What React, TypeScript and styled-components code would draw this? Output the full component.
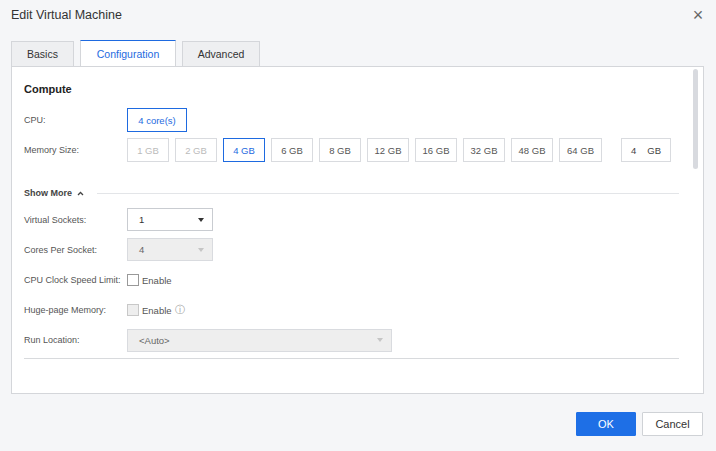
import React from "react";
import styled, { createGlobalStyle } from "styled-components";

const Global = createGlobalStyle`
  body { margin: 0; background: #f5f6f8; font-family: "Liberation Sans", Arial, sans-serif; }
`;
const Dialog = styled.div`
  width: 716px; height: 451px; box-sizing: border-box; background: #f5f6f8;
  display: flex; flex-direction: column; padding: 0 12px 0 11px;
`;
const Header = styled.div`
  height: 30px; display: flex; align-items: center; justify-content: space-between;
  font-size: 12.5px; color: #333; margin-right: -2px;
`;
const Close = styled.span` font-size: 18px; color: #666; width: 16px; text-align:center; line-height: 16px; `;
const Tabs = styled.div` display: flex; gap: 6px; margin-top: 10px; height: 26px; align-items: flex-end; `;
const Tab = styled.div<{ $active?: boolean; $w: number }>`
  width: ${p => p.$w}px; height: ${p => (p.$active ? 27 : 25)}px; box-sizing: border-box;
  display: flex; align-items: center; justify-content: center; font-size: 10.5px;
  background: ${p => (p.$active ? "#fff" : "#eeeff1")};
  color: ${p => (p.$active ? "#1e6ae0" : "#333")};
  border: 1px solid #d4d6da; border-bottom: none;
  ${p => p.$active && "border-top: 1px solid #1e6ae0; margin-bottom: -1px; position: relative;"}
`;
const Panel = styled.div`
  height: 328px; background: #fff; border: 1px solid #d4d6da; box-sizing: border-box;
  display: flex; position: relative; overflow: hidden;
`;
const Content = styled.div` flex: 1; padding: 16px 24px 0 12px; `;
const Scroll = styled.div`
  position: absolute; right: 5px; top: 2px; width: 5px; height: 100px; background: #d8dadf; border-radius: 3px;
`;
const Section = styled.div` font-size: 11px; font-weight: bold; color: #222; margin-bottom: 14px; `;
const Row = styled.div<{ $h?: number; $mb?: number }>`
  display: flex; align-items: center; height: ${p => p.$h ?? 24}px; margin-bottom: ${p => p.$mb ?? 6}px;
`;
const Label = styled.div` width: 103px; flex-shrink: 0; font-size: 9px; color: #555; white-space: nowrap; `;
const Opt = styled.div<{ $sel?: boolean; $dis?: boolean; $w?: number }>`
  width: ${p => p.$w ?? 42}px; height: 24px; box-sizing: border-box; display: flex; align-items: center; justify-content: center;
  font-size: 9.5px; margin-right: 6px;
  border: 1px solid ${p => (p.$sel ? "#1e6ae0" : "#d9dbdf")};
  color: ${p => (p.$sel ? "#1e6ae0" : p.$dis ? "#bbb" : "#555")};
`;
const NumInput = styled.div`
  width: 50px; height: 24px; box-sizing: border-box; border: 1px solid #d9dbdf; margin-left: 13px;
  display: flex; justify-content: space-between; align-items: center; padding: 0 9px; font-size: 9.5px; color: #444;
`;
const ShowMore = styled.div`
  display: flex; align-items: center; font-size: 9px; font-weight: bold; color: #444; margin: 26px 0 10px;
  & > span { margin-right: 13px; display: flex; align-items: center; gap: 5px; }
  &::after { content: ""; flex: 1; border-top: 1px solid #e3e5e8; }
`;
const Select = styled.div<{ $w: number; $dis?: boolean }>`
  width: ${p => p.$w}px; height: 23px; box-sizing: border-box; border: 1px solid ${p => (p.$dis ? "#d9dbdf" : "#c9ccd1")};
  background: ${p => (p.$dis ? "#eeeeee" : "#fff")}; color: ${p => (p.$dis ? "#666" : "#333")};
  display: flex; align-items: center; justify-content: space-between; padding: 0 8px 0 11px; font-size: 9.5px;
`;
const Caret = styled.span<{ $dis?: boolean }>`
  width: 0; height: 0; border-left: 3px solid transparent; border-right: 3px solid transparent;
  border-top: 4px solid ${p => (p.$dis ? "#c5c5c5" : "#333")};
`;
const Check = styled.span<{ $dis?: boolean }>`
  width: 10px; height: 10px; border: 1px solid ${p => (p.$dis ? "#c8c8c8" : "#999")};
  background: ${p => (p.$dis ? "#eee" : "#fff")};
`;
const CheckText = styled.span` font-size: 9.5px; color: #555; display: flex; align-items: center; gap: 3px; `;
const Divider = styled.div` border-top: 1px solid #d8dadd; margin-top: 6px; `;
const Footer = styled.div` flex: 1; display: flex; justify-content: flex-end; align-items: center; gap: 6px; padding-top: 2px; margin-right: 1px;`;
const Btn = styled.button<{ $primary?: boolean }>`
  height: 24px; width: ${p => (p.$primary ? 60 : 61)}px; font-family: inherit; font-size: 11px;
  background: ${p => (p.$primary ? "#1e6fe6" : "#fff")}; color: ${p => (p.$primary ? "#fff" : "#333")};
  border: 1px solid ${p => (p.$primary ? "#1e6fe6" : "#cfd2d6")}; border-radius: 1px;
`;

const mem = ["1 GB", "2 GB", "4 GB", "6 GB", "8 GB", "12 GB", "16 GB", "32 GB", "48 GB", "64 GB"];

export default function App() {
  return (
    <Dialog>
      <Global />
      <Header>Edit Virtual Machine<Close>×</Close></Header>
      <Tabs>
        <Tab $w={63}>Basics</Tab>
        <Tab $w={96} $active>Configuration</Tab>
        <Tab $w={78}>Advanced</Tab>
      </Tabs>
      <Panel>
        <Content>
          <Section>Compute</Section>
          <Row $h={22} $mb={7}><Label>CPU:</Label><Opt $sel $w={60}>4 core(s)</Opt></Row>
          <Row>
            <Label>Memory Size:</Label>
            {mem.map((m, i) => (
              <Opt key={m} $sel={i === 2} $dis={i < 2} $w={i === 9 ? 43 : 42}>{m}</Opt>
            ))}
            <NumInput><span>4</span><span>GB</span></NumInput>
          </Row>
          <ShowMore>
            <span>Show More
              <svg width="7" height="5" viewBox="0 0 7 5"><path d="M1 4 L3.5 1.5 L6 4" stroke="#444" strokeWidth="1.3" fill="none" /></svg>
            </span>
          </ShowMore>
          <Row $h={23} $mb={7}><Label>Virtual Sockets:</Label><Select $w={86}>1<Caret /></Select></Row>
          <Row $h={23} $mb={7}><Label>Cores Per Socket:</Label><Select $w={86} $dis>4<Caret $dis /></Select></Row>
          <Row $h={24} $mb={6}><Label>CPU Clock Speed Limit:</Label><CheckText><Check />Enable</CheckText></Row>
          <Row $h={24} $mb={6}><Label>Huge-page Memory:</Label><CheckText><Check $dis />Enable <span style={{ color: "#999" }}>ⓘ</span></CheckText></Row>
          <Row $h={24} $mb={0}><Label>Run Location:</Label><Select $w={265} $dis>&lt;Auto&gt;<Caret $dis /></Select></Row>
          <Divider />
        </Content>
        <Scroll />
      </Panel>
      <Footer>
        <Btn $primary>OK</Btn>
        <Btn>Cancel</Btn>
      </Footer>
    </Dialog>
  );
}
